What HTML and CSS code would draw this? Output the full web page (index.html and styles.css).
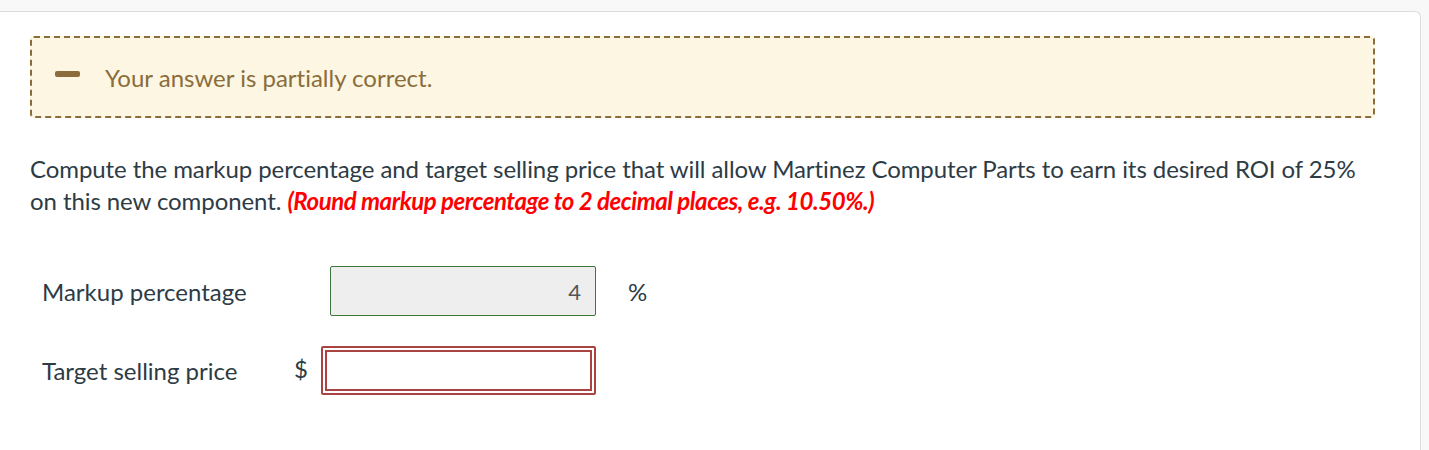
FILE: index.html
```html
<!DOCTYPE html>
<html lang="en">
<head>
<meta charset="utf-8">
<title>Question</title>
<link rel="stylesheet" href="styles.css">
</head>
<body>
<div class="card">
  <div class="feedback">
    <span class="feedback-icon"></span>
    <span class="feedback-text">Your answer is partially correct.</span>
  </div>
  <p class="question">Compute the markup percentage and target selling price that will allow Martinez Computer Parts to earn its desired ROI of 25% on this new component. <em class="hint">(Round markup percentage to 2 decimal places, e.g. 10.50%.)</em></p>
  <div class="answers">
    <div class="row">
      <span class="label">Markup percentage</span>
      <span class="cell">
        <input class="field field-correct" type="text" value="4" readonly>
      </span>
      <span class="suffix">%</span>
    </div>
    <div class="row">
      <span class="label">Target selling price</span>
      <span class="cell">
        <span class="prefix">$</span>
        <input class="field field-wrong" type="text" value="">
      </span>
    </div>
  </div>
</div>
</body>
</html>
```

FILE: styles.css
```css
html, body {
  margin: 0;
  padding: 0;
  background: #f8f8f8;
  font-family: Lato, "Open Sans", sans-serif;
  font-variant-ligatures: none;
  color: #2d3b45;
}

.card {
  margin-top: 11px;
  width: 1421px;
  height: 450px;
  box-sizing: border-box;
  background: #ffffff;
  border-top: 1px solid #dcdcdc;
  border-right: 1px solid #dcdcdc;
  border-top-right-radius: 6px;
  padding: 24px 45px 0 30px;
}

.feedback {
  display: flex;
  align-items: center;
  height: 82px;
  box-sizing: border-box;
  border: 2px dashed #8a6d3b;
  border-radius: 4px;
  background: #fcf6e2;
  padding-left: 23px;
}

.feedback-icon {
  display: block;
  width: 25px;
  height: 6px;
  border-radius: 2px;
  background: #8a6d3b;
  margin-right: 25px;
  margin-top: -6px;
}

.feedback-text {
  font-size: 24px;
  color: #8a6d3b;
  margin-top: 0;
}

.question {
  margin: 35px 0 0 0;
  font-size: 24px;
  line-height: 32px;
  letter-spacing: -0.08px;
  color: #2d3b45;
}

.hint {
  color: #ff0000;
  font-weight: bold;
  font-style: italic;
  letter-spacing: -0.45px;
}

.answers {
  margin-top: 49px;
  padding-left: 12px;
}

.row {
  display: flex;
  align-items: center;
  margin-bottom: 30px;
}

.label {
  width: 255px;
  font-size: 24px;
}

.cell {
  width: 299px;
  display: flex;
  align-items: center;
  justify-content: flex-end;
}

.prefix {
  font-size: 24px;
  margin-right: 13px;
  margin-top: -4px;
}

.suffix {
  font-size: 24px;
  margin-left: 32px;
}

.field {
  box-sizing: border-box;
  font-family: Lato, "Open Sans", sans-serif;
  font-size: 22px;
  color: #555555;
  text-align: right;
  outline: none;
}

.field-correct {
  width: 266px;
  height: 50px;
  border: 1px solid #3c763d;
  border-radius: 2px;
  background: #eeeeee;
  padding: 0 14px;
}

.field-wrong {
  width: 275px;
  height: 49px;
  border: 6px double #a94442;
  border-radius: 2px;
  background: #ffffff;
  padding: 0 10px;
}
```
